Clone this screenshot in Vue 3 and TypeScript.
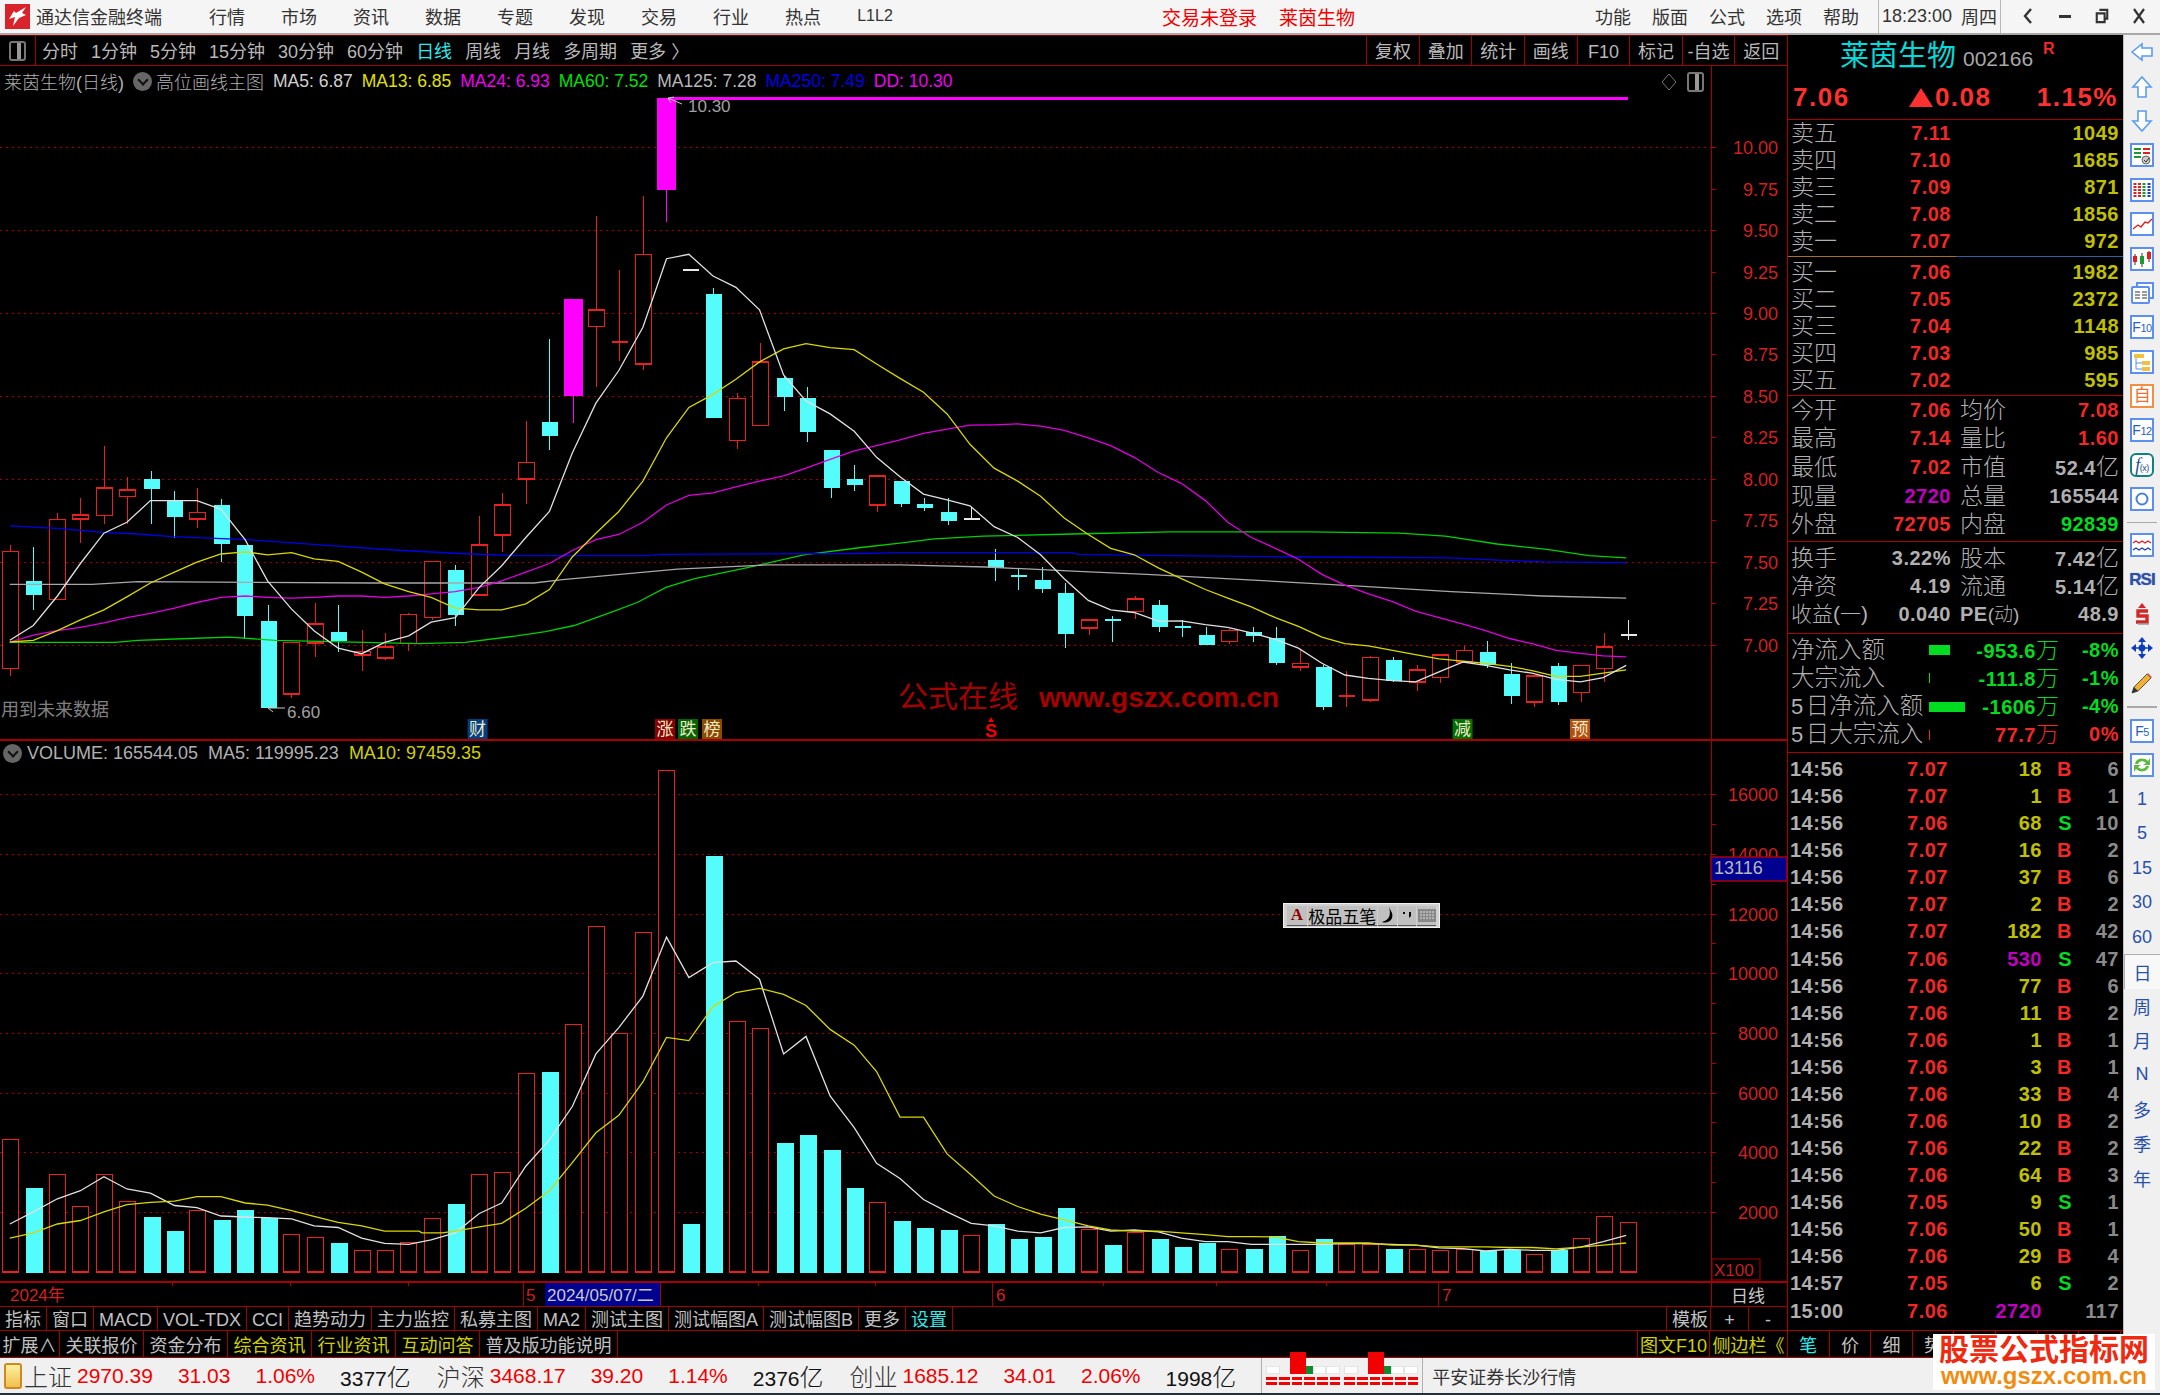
<template>
  <div class="app">
    <!-- top menu -->
    <header class="topbar">
      <svg class="logo" viewBox="0 0 25 25">
        <rect width="25" height="25" fill="#d8232a"/>
        <path d="M4 15 L10 13 L8 22 L14 14 L21 11 L17 9 L21 3 L11 9 L9 7 Z" fill="#fff"/>
      </svg>
      <span class="app-name">通达信金融终端</span>
      <nav class="menu">
        <span v-for="m in menus" :key="m">{{ m }}</span>
      </nav>
      <span class="login">交易未登录</span>
      <span class="login second">莱茵生物</span>
      <nav class="menu-right">
        <span v-for="m in rightMenus" :key="m">{{ m }}</span>
      </nav>
      <div class="clock"><span>18:23:00</span><span class="week">周四</span></div>
      <div class="win-btns">
        <svg viewBox="0 0 14 18"><path d="M10 2 L4 9 L10 16" fill="none" stroke="#333" stroke-width="2.4"/></svg>
        <svg viewBox="0 0 14 18"><rect x="1" y="8" width="12" height="3" fill="#333"/></svg>
        <svg viewBox="0 0 16 18"><path d="M5 2h9v10h-3M2 6h9v10H2z" fill="none" stroke="#333" stroke-width="2.4"/></svg>
        <svg viewBox="0 0 14 18"><path d="M2 2 L12 16 M12 2 L2 16" fill="none" stroke="#333" stroke-width="2.2"/></svg>
      </div>
    </header>

    <div class="body">
      <main class="main">
        <!-- period tool bar -->
        <div class="toolbar">
          <div class="tool-toggle"><i class="box-icon"></i></div>
          <div class="periods">
            <span v-for="p in periods" :key="p" :class="{ active: p === '日线' }">{{ p }}</span>
            <span>更多 〉</span>
          </div>
          <div class="tool-btns">
            <span v-for="b in toolBtns" :key="b">{{ b }}</span>
          </div>
        </div>

        <!-- charts -->
        <div class="chart-wrap">
          <svg class="chart" viewBox="0 66 1787 1240" width="1787" height="1240">
            <!-- dotted grid -->
            <g shape-rendering="crispEdges">
              <line v-for="t in gridYs" :key="t" x1="0" x2="1711" :y1="t" :y2="t" class="dot"/>
            </g>

            <!-- price candles -->
            <g shape-rendering="crispEdges">
              <g v-for="c in candleBars" :key="c.x">
                <line :x1="c.x" :x2="c.x" :y1="c.top" :y2="c.bot" :stroke="c.color"/>
                <rect v-if="c.hollow" :x="c.x - 8" :y="c.bodyY" width="16" :height="c.bodyH" fill="#000" :stroke="c.color" stroke-width="1.5"/>
                <rect v-else :x="c.x - c.w / 2" :y="c.bodyY" :width="c.w" :height="c.bodyH" :fill="c.color"/>
              </g>
            </g>
            <line x1="670" x2="1628" y1="98.6" y2="98.6" stroke="#f0f" stroke-width="3"/>

            <!-- price MA lines -->
            <polyline v-for="l in priceLines" :key="l.color" :points="l.points" :stroke="l.color" class="ma"/>

            <!-- high / low markers -->
            <path d="M682 104 L668 98 M668 98 L674 97 M668 98 L671 103" class="marker"/>
            <text x="688" y="112" class="mark-text">10.30</text>
            <path d="M285 708 L268 708 M268 708 L273 705 M268 708 L273 712" class="marker"/>
            <text x="287" y="718" class="mark-text">6.60</text>
            <text x="1" y="716" class="hint">用到未来数据</text>

            <!-- site mark -->
            <text x="898" y="707" class="site-zh">公式在线</text>
            <text x="1039" y="707" class="site-en">www.gszx.com.cn</text>

            <!-- event badges -->
            <g v-for="b in badges" :key="b.text">
              <rect :x="b.x - 10" y="719" width="20" height="20" :fill="b.bg"/>
              <text :x="b.x" y="735" class="badge-text">{{ b.text }}</text>
            </g>
            <path d="M991 717 L994 722 H988 Z" fill="#f00000"/>
            <text x="991" y="737" class="badge-s">S</text>

            <!-- volume bars -->
            <g shape-rendering="crispEdges">
              <g v-for="v in volBars" :key="v.x">
                <rect v-if="v.up" :x="v.x - 8" :y="v.top" width="16" :height="1272 - v.top" fill="#000" stroke="#e82020" stroke-width="1.5"/>
                <rect v-else :x="v.x - 8" :y="v.top" width="17" :height="1273 - v.top" fill="#54fcfc"/>
              </g>
            </g>
            <polyline v-for="l in volLines" :key="l.color" :points="l.points" :stroke="l.color" class="ma"/>

            <!-- frame -->
            <g class="frame" shape-rendering="crispEdges">
              <line x1="1711" x2="1711" y1="66" y2="1282"/>
              <line x1="0" x2="1787" y1="740" y2="740" stroke-width="2"/>
              <line x1="0" x2="1787" y1="1282" y2="1282" stroke-width="2"/>
              <line v-for="t in axisTicks" :key="t" x1="1711" x2="1716" :y1="t" :y2="t"/>
              <line v-for="t in dateTicks" :key="t" :x1="t" :x2="t" y1="1282" y2="1286"/>
              <line v-for="t in [523, 545, 660, 992, 1438, 1711]" :key="t" :x1="t" :x2="t" y1="1282" y2="1306"/>
            </g>

            <!-- axes -->
            <text v-for="a in priceAxis" :key="a.label" x="1778" :y="a.y + 7" class="axis">{{ a.label }}</text>
            <text v-for="a in volAxis" :key="a.label" x="1778" :y="a.y + 7" class="axis">{{ a.label }}</text>
            <rect x="1711" y="857" width="76" height="24" fill="#000090" stroke="#a80000" stroke-width="1.5"/>
            <text x="1714" y="874" class="box-value">13116</text>
            <rect x="1712" y="1259" width="48" height="21" fill="#000" stroke="#a80000"/>
            <text x="1714" y="1276" class="x-unit">X100</text>

            <!-- date row -->
            <rect x="545" y="1283" width="115" height="23" fill="#000090"/>
            <text x="10" y="1301" class="date">2024年</text>
            <text x="526" y="1301" class="date">5</text>
            <text x="547" y="1301" class="date-cur">2024/05/07/二</text>
            <text x="996" y="1301" class="date">6</text>
            <text x="1442" y="1301" class="date">7</text>
            <text x="1731" y="1302" class="date-cur">日线</text>
          </svg>

          <div class="legend">
            <span class="grey zh">莱茵生物(日线)</span>
            <i class="circle-chev"></i>
            <span class="grey zh name">高位画线主图</span>
            <span v-for="m in priceLegend" :key="m.label" :style="{ color: m.color }">{{ m.label }}</span>
          </div>
          <div class="legend-icons">
            <svg width="16" height="20" viewBox="0 0 16 20"><path d="M8 2 L15 10 L8 18 L1 10 Z" fill="none" stroke="#777"/></svg>
            <i class="box-icon"></i>
          </div>
          <div class="legend vol">
            <i class="circle-chev"></i>
            <span class="grey first">VOLUME: 165544.05</span>
            <span class="grey">MA5: 119995.23</span>
            <span class="yellow">MA10: 97459.35</span>
          </div>

          <!-- floating input method bar -->
          <div class="ime">
            <span class="ime-a">A</span>
            <span class="ime-name">极品五笔</span>
            <span class="ime-cell">
              <svg width="14" height="18" viewBox="0 0 14 18"><path d="M9 1 C11 8 10 14 2 16 C8 18 14 14 12 7 Z" fill="#000"/></svg>
            </span>
            <span class="ime-cell">
              <svg width="12" height="12" viewBox="0 0 12 12"><path d="M2 3h2v2H2zM8 3h2v4L8 9z" fill="#000"/></svg>
            </span>
            <span class="ime-cell">
              <svg width="18" height="18" viewBox="0 0 18 18"><rect y="3" width="18" height="13" fill="#888"/><path d="M2 6h14M2 9h14M2 12h14" stroke="#ddd" stroke-dasharray="2 1"/></svg>
            </span>
          </div>
        </div>

        <!-- bottom tabs -->
        <div class="tabrow first">
          <span v-for="t in tabs1" :key="t" :class="{ cyan: t === '设置' }">{{ t }}</span>
          <div class="tabrow-end">
            <span class="w-45">模板</span><span class="w-38">+</span><span class="w-38 last">-</span>
          </div>
        </div>
        <div class="tabrow second">
          <span v-for="t in tabs2" :key="t" :class="{ yellow: yellowTabs.includes(t) }">{{ t }}</span>
          <div class="tabrow-end">
            <span class="yellow w-tight">图文F10</span><span class="yellow w-side last">侧边栏《</span>
          </div>
        </div>
      </main>

      <!-- quote panel -->
      <aside class="panel">
        <div class="quote-head">
          <div class="title">
            <span class="stock">莱茵生物</span><span class="code">002166</span><sup class="r">R</sup>
          </div>
          <div class="price-row">
            <span>7.06</span><span class="chg"><i class="tri"></i>0.08</span><span>1.15%</span>
          </div>
        </div>

        <div class="book sell">
          <div v-for="r in sells" :key="r[0]" class="book-row">
            <span class="zh grey">{{ r[0] }}</span><b class="red">{{ r[1] }}</b><b class="vol-c">{{ r[2] }}</b>
          </div>
        </div>
        <div class="book buy">
          <div v-for="r in buys" :key="r[0]" class="book-row">
            <span class="zh grey">{{ r[0] }}</span><b class="red">{{ r[1] }}</b><b class="vol-c">{{ r[2] }}</b>
          </div>
        </div>

        <div class="stats first">
          <div v-for="r in statsA" :key="r.a" class="stat-row">
            <span class="zh grey">{{ r.a }}</span><b :class="r.ac">{{ r.av }}</b>
            <span class="zh grey lab2">{{ r.b }}</span><b :class="r.bc">{{ r.bv }}<span v-if="r.unit" class="zh unit">{{ r.unit }}</span></b>
          </div>
        </div>
        <div class="stats second">
          <div class="stat-row">
            <span class="zh grey">换手</span><b class="grey">3.22%</b>
            <span class="zh grey lab2">股本</span><b class="grey">7.42<span class="zh unit">亿</span></b>
          </div>
          <div class="stat-row">
            <span class="zh grey">净资</span><b class="grey">4.19</b>
            <span class="zh grey lab2">流通</span><b class="grey">5.14<span class="zh unit">亿</span></b>
          </div>
          <div class="stat-row">
            <span class="zh grey small">收益(一)</span><b class="grey">0.040</b>
            <span class="grey lab2 pe"><b>PE</b><span class="zh">(动)</span></span><b class="grey">48.9</b>
          </div>
        </div>

        <div class="flows">
          <div v-for="f in flows" :key="f.label" class="flow-row" :class="f.color">
            <span class="zh grey flow-label"><b v-if="f.five">5</b>{{ f.label }}</span>
            <span class="flow-bar"><i :style="{ width: f.bar + 'px' }"></i></span>
            <b class="flow-val">{{ f.val }}<span class="zh unit">万</span></b>
            <b class="flow-pct">{{ f.pct }}</b>
          </div>
        </div>

        <div class="trades">
          <div v-for="(t, i) in trades" :key="i" class="trade-row">
            <b class="grey">{{ t[0] }}</b>
            <b class="red">{{ t[1] }}</b>
            <b :class="Number(t[2]) >= 500 ? 'purple' : 'vol-c'">{{ t[2] }}</b>
            <b :class="t[3] === 'S' ? 'green' : 'red'">{{ t[3] }}</b>
            <b class="dim">{{ t[4] }}</b>
          </div>
        </div>

        <div class="panel-tabs">
          <span class="cyan">笔</span><span>价</span><span>细</span><span>势</span><span></span><span></span><span></span><span></span>
        </div>
      </aside>

      <!-- side icons -->
      <aside class="sidebar">
        <div class="sb-item">
          <svg class="ic" viewBox="0 0 24 24"><path d="M2 12 L12 4 V8 H22 V16 H12 V20 Z" class="arrow"/></svg>
        </div>
        <div class="sb-item">
          <svg class="ic" viewBox="0 0 24 24"><path d="M12 2 L21 12 H16 V22 H8 V12 H3 Z" class="arrow"/></svg>
        </div>
        <div class="sb-item">
          <svg class="ic" viewBox="0 0 24 24"><path d="M12 22 L21 12 H16 V2 H8 V12 H3 Z" class="arrow"/></svg>
        </div>
        <div class="sb-item">
          <svg class="ic" viewBox="0 0 24 24"><rect x="1" y="1" width="22" height="22" class="frame-ic"/><path d="M4 6h7M4 10h7M4 14h7" stroke="#1a9a30" stroke-width="2"/><path d="M13 6h7M13 10h7" stroke="#e02020" stroke-width="2"/><circle cx="16" cy="17" r="4" fill="#ccc" stroke="#666"/><path d="M14 17l2 2 3-4" fill="none" stroke="#333"/></svg>
        </div>
        <div class="sb-item">
          <svg class="ic" viewBox="0 0 24 24"><rect x="1" y="1" width="22" height="22" class="frame-ic"/><path d="M5 5v14" stroke="#e02020" stroke-width="3" stroke-dasharray="2 1"/><path d="M9.5 5v14" stroke="#e02020" stroke-width="3" stroke-dasharray="2 1"/><path d="M14 5v14" stroke="#1a9a30" stroke-width="3" stroke-dasharray="2 1"/><path d="M19 5v14" stroke="#2040c0" stroke-width="3" stroke-dasharray="2 1"/></svg>
        </div>
        <div class="sb-item">
          <svg class="ic" viewBox="0 0 24 24"><rect x="1" y="1" width="22" height="22" class="frame-ic"/><path d="M3 17 L8 13 L11 15 L15 10 L18 11 L22 7" fill="none" stroke="#e02020" stroke-width="1.4"/></svg>
        </div>
        <div class="sb-item">
          <svg class="ic" viewBox="0 0 24 24"><rect x="1" y="1" width="22" height="22" class="frame-ic"/><path d="M5 7v11M12 6v14M19 4v11" stroke="#333"/><rect x="3" y="9" width="4" height="6" fill="#e02020"/><rect x="10" y="9" width="4" height="8" fill="#1a9a30"/><rect x="17" y="5" width="4" height="7" fill="#e02020"/></svg>
        </div>
        <div class="sb-item">
          <svg class="ic" viewBox="0 0 24 24"><rect x="7" y="2" width="16" height="15" class="frame-ic"/><rect x="2" y="6" width="17" height="16" class="frame-ic" rx="1"/><path d="M5 11h5M12 11h5M5 14h5M12 14h5M5 17h5M12 17h5" stroke="#777" stroke-width="1.6"/></svg>
        </div>
        <div class="sb-item"><span class="ic-text"><i>F</i>10</span></div>
        <div class="sb-item">
          <svg class="ic" viewBox="0 0 24 24"><rect x="1" y="1" width="22" height="22" class="frame-ic"/><path d="M6 8v11h6M6 13h6" stroke="#5b90f0" fill="none"/><rect x="4" y="4" width="10" height="4" fill="#f0c040"/><rect x="12" y="11" width="8" height="4" fill="#f0c040"/><rect x="12" y="17" width="8" height="4" fill="#f0c040"/></svg>
        </div>
        <div class="sb-item">
          <span class="ic-text zi">自</span>
        </div>
        <div class="sb-item"><span class="ic-text"><i>F</i>12</span></div>
        <div class="sb-item">
          <span class="ic-text fx"><i>f</i><small>(x)</small></span>
        </div>
        <div class="sb-item">
          <svg class="ic" viewBox="0 0 24 24"><rect x="1" y="1" width="22" height="22" class="frame-ic"/><circle cx="12" cy="12" r="5.5" fill="none" stroke="#4a80d8" stroke-width="2"/></svg>
        </div>
        <div class="sb-divider"></div>
        <div class="sb-item">
          <svg class="ic" viewBox="0 0 24 24"><rect x="1" y="1" width="22" height="22" class="frame-ic"/><path d="M3 10l3-2 3 2 3-2 3 2 3-2 3 2" fill="none" stroke="#e02020" stroke-width="1.4"/><path d="M3 17l3-2 3 2 3-2 3 2 3-2 3 2" fill="none" stroke="#2040c0" stroke-width="1.4"/></svg>
        </div>
        <div class="sb-item"><span class="rsi">RSI</span></div>
        <div class="sb-item">
          <svg class="ic" viewBox="0 0 24 24"><path d="M12 1 L16 6 H8 Z" fill="#d02828"/><path d="M18 9 H8 V14 H17 V20 H6" fill="none" stroke="#d02828" stroke-width="3.4"/><path d="M8 22 H19" stroke="#999" stroke-width="1.5"/></svg>
        </div>
        <div class="sb-item">
          <svg class="ic" viewBox="0 0 24 24"><path d="M12 1 L16 6 H8 Z M12 23 L16 18 H8 Z M1 12 L6 8 V16 Z M23 12 L18 8 V16 Z" fill="#0a3cc0"/><circle cx="12" cy="12" r="3.4" fill="#0a3cc0"/><path d="M12 5V19M5 12H19" stroke="#0a3cc0" stroke-width="1.6"/></svg>
        </div>
        <div class="sb-item">
          <svg class="ic" viewBox="0 0 24 24"><path d="M2 22 L4 16 L17 3 L21 7 L8 20 Z" fill="#f0b030" stroke="#555"/><path d="M17 3 L21 7 L22 6 L18 2 Z" fill="#e06060"/><path d="M2 22 L4 16 L8 20 Z" fill="#333"/></svg>
        </div>
        <div class="sb-divider tall"></div>
        <div class="sb-item"><span class="ic-text"><i>F</i>5</span></div>
        <div class="sb-item">
          <svg class="ic" viewBox="0 0 24 24"><rect x="1" y="1" width="22" height="22" class="frame-ic"/><path d="M5 11 C6 5 14 4 18 8 L20 5 V12 H13 L16 10 C13 7 9 8 8 11 Z" fill="#60b840"/><path d="M19 13 C18 19 10 20 6 16 L4 19 V12 H11 L8 14 C11 17 15 16 16 13 Z" fill="#60b840"/></svg>
        </div>
        <div v-for="p in sidePeriods" :key="p" class="sb-item period" :class="{ on: p === '日' }">{{ p }}</div>
      </aside>
    </div>

    <!-- status bar -->
    <footer class="status">
      <i class="status-icon"></i>
      <div v-for="s in indexes" :key="s.name" class="idx">
        <span class="idx-name">{{ s.name }}</span>
        <span class="red">{{ s.value }}</span>
        <span class="red">{{ s.chg }}</span>
        <span class="red">{{ s.pct }}</span>
        <span class="amt">{{ s.amt }}<em>亿</em></span>
      </div>
      <div class="mini-wrap">
        <div v-for="g in 2" :key="g" class="mini">
          <div class="mini-top"><i></i><i class="r"></i><i class="g"></i><i></i><i></i></div>
          <div class="mini-bot"><i v-for="n in 12" :key="n"></i></div>
        </div>
      </div>
      <span class="broker">平安证券长沙行情</span>
    </footer>

    <!-- site stamp -->
    <div class="stamp">
      <div class="stamp-zh">股票公式指标网</div>
      <div class="stamp-en">www.gszx.com.cn</div>
    </div>
  </div>
</template>

<script setup lang="ts">
type Kind = 'r' | 'c' | 'm' | 'w'
type Candle = [Kind, number, number, number, number]
type Pt = [number, number]

const menus = ['行情', '市场', '资讯', '数据', '专题', '发现', '交易', '行业', '热点', 'L1L2']
const rightMenus = ['功能', '版面', '公式', '选项', '帮助']
const periods = ['分时', '1分钟', '5分钟', '15分钟', '30分钟', '60分钟', '日线', '周线', '月线', '多周期']
const toolBtns = ['复权', '叠加', '统计', '画线', 'F10', '标记', '-自选', '返回']
const tabs1 = ['指标', '窗口', 'MACD', 'VOL-TDX', 'CCI', '趋势动力', '主力监控', '私募主图', 'MA2', '测试主图', '测试幅图A', '测试幅图B', '更多', '设置']
const tabs2 = ['扩展∧', '关联报价', '资金分布', '综合资讯', '行业资讯', '互动问答', '普及版功能说明']
const yellowTabs = ['综合资讯', '行业资讯', '互动问答']
const sidePeriods = ['1', '5', '15', '30', '60', '日', '周', '月', 'N', '多', '季', '年']

// values were read off the zoomed reference, so x / y go through the crop scale
const X0 = (zx: number) => zx / 1.742
const X1 = (zx: number) => 900 + zx / 1.742
const PY = (zy: number) => 80 + zy / 2.306
const VY = (zy: number) => 740 + zy / 2.851
const candleX = (i: number) => Math.round(9.8 + i * 23.45) + 0.5

const rawCandles: Candle[] = [
  ['r', 1072, 1087, 1357, 1375], ['c', 1076, 1155, 1188, 1222], ['r', 998, 1014, 1198, 1198], ['r', 965, 1003, 1012, 1068],
  ['r', 843, 941, 1004, 1023], ['r', 916, 945, 960, 1023], ['c', 902, 920, 943, 1023], ['c', 947, 970, 1008, 1057],
  ['r', 940, 997, 1012, 1033], ['c', 966, 979, 1070, 1112], ['c', 1072, 1072, 1237, 1288], ['c', 1210, 1248, 1448, 1448],
  ['r', 1297, 1297, 1416, 1424], ['r', 1207, 1255, 1298, 1330], ['c', 1210, 1273, 1293, 1320], ['r', 1268, 1318, 1326, 1362],
  ['r', 1275, 1308, 1333, 1338], ['r', 1228, 1232, 1300, 1316], ['r', 1110, 1110, 1240, 1245], ['c', 1118, 1131, 1233, 1258],
  ['r', 1005, 1072, 1188, 1188], ['r', 953, 980, 1049, 1088], ['r', 787, 882, 920, 977], ['c', 597, 788, 822, 853],
  ['m', 505, 505, 729, 790], ['r', 314, 530, 568, 708], ['r', 438, 603, 606, 648], ['r', 268, 402, 655, 668],
  ['m', 42, 42, 254, 327], ['w', 436, 436, 437, 437], ['c', 480, 494, 780, 780], ['r', 722, 734, 831, 850],
  ['r', 607, 650, 797, 797], ['c', 682, 687, 732, 763], ['c', 708, 733, 812, 835], ['c', 853, 853, 942, 963],
  ['c', 888, 920, 933, 947], ['r', 913, 913, 980, 997], ['c', 925, 925, 978, 985], ['c', 963, 978, 987, 995],
  ['c', 965, 996, 1016, 1026], ['w', 985, 1010, 1012, 1015], ['c', 1082, 1106, 1125, 1155], ['c', 1125, 1142, 1144, 1175],
  ['c', 1123, 1152, 1174, 1182], ['c', 1160, 1183, 1278, 1310], ['r', 1245, 1245, 1264, 1280], ['c', 1237, 1244, 1246, 1296],
  ['r', 1190, 1197, 1226, 1243], ['c', 1200, 1211, 1261, 1272], ['c', 1245, 1260, 1266, 1285], ['c', 1262, 1280, 1303, 1303],
  ['r', 1265, 1270, 1295, 1300], ['c', 1262, 1273, 1282, 1295], ['c', 1262, 1286, 1345, 1348], ['r', 1312, 1346, 1354, 1362],
  ['c', 1350, 1353, 1445, 1452], ['r', 1362, 1418, 1422, 1445], ['r', 1328, 1332, 1430, 1435], ['c', 1330, 1338, 1385, 1388],
  ['r', 1350, 1361, 1388, 1408], ['r', 1325, 1326, 1378, 1390], ['r', 1305, 1315, 1342, 1342], ['c', 1294, 1318, 1350, 1355],
  ['c', 1345, 1370, 1420, 1440], ['r', 1372, 1374, 1434, 1447], ['c', 1345, 1352, 1434, 1442], ['r', 1350, 1350, 1413, 1434],
  ['r', 1276, 1308, 1357, 1388], ['w', 1245, 1277, 1279, 1292],
]

const kindColor: Record<Kind, string> = { r: '#e82020', c: '#54fcfc', m: '#ff00ff', w: '#e8e8e8' }

const candleBars = rawCandles.map(([k, wt, bt, bb, wb], i) => {
  const h = PY(bb) - PY(bt)
  const thin = h < 3
  return {
    x: candleX(i),
    color: kindColor[k],
    top: PY(wt),
    bot: PY(wb),
    bodyY: PY(bt),
    bodyH: thin ? 2 : h,
    hollow: k === 'r' && !thin,
    w: k === 'm' ? 19 : 16,
  }
})

const path = (left: Pt[], right: Pt[], yf: (n: number) => number) =>
  [...left.map(([x, y]) => `${X0(x).toFixed(1)},${yf(y).toFixed(1)}`), ...right.map(([x, y]) => `${X1(x).toFixed(1)},${yf(y).toFixed(1)}`)].join(' ')

const priceLines = [
  {
    color: '#00d000',
    points: path(
      [[17, 1297], [200, 1297], [240, 1292], [330, 1288], [400, 1285], [480, 1292], [730, 1300], [810, 1297], [900, 1282], [950, 1272], [1000, 1258], [1070, 1225], [1110, 1205], [1160, 1170], [1210, 1150], [1300, 1125], [1400, 1095], [1500, 1078]],
      [[0, 1068], [60, 1058], [145, 1052], [300, 1047], [470, 1042], [715, 1042], [870, 1045], [950, 1052], [1040, 1070], [1130, 1083], [1200, 1097], [1265, 1102]],
      PY,
    ),
  },
  {
    color: '#0000e8',
    points: path(
      [[17, 1028], [100, 1034], [180, 1043], [240, 1047], [300, 1053], [430, 1060], [570, 1073], [700, 1085], [820, 1093], [900, 1097], [1130, 1097], [1150, 1094], [1500, 1092]],
      [[0, 1090], [300, 1090], [310, 1094], [470, 1097], [715, 1100], [960, 1102], [1040, 1107], [1120, 1111], [1265, 1113]],
      PY,
    ),
  },
  {
    color: '#a8a8a8',
    points: path(
      [[17, 1163], [160, 1163], [240, 1157], [650, 1160], [930, 1160], [980, 1152], [1180, 1128], [1340, 1118], [1500, 1118]],
      [[0, 1118], [150, 1123], [230, 1128], [310, 1133], [430, 1140], [640, 1155], [800, 1167], [960, 1180], [1120, 1190], [1265, 1195]],
      PY,
    ),
  },
  {
    color: '#e000e0',
    points: path(
      [[17, 1296], [58, 1280], [100, 1270], [140, 1262], [181, 1252], [221, 1240], [262, 1230], [304, 1218], [343, 1205], [385, 1193], [427, 1190], [466, 1193], [508, 1195], [547, 1193], [589, 1190], [630, 1190], [670, 1193], [712, 1190], [751, 1185], [793, 1180], [835, 1170], [874, 1155], [916, 1135], [957, 1115], [997, 1085], [1038, 1060], [1078, 1048], [1120, 1020], [1161, 980], [1200, 958], [1242, 952], [1282, 938], [1323, 925], [1365, 913], [1404, 895], [1446, 875], [1488, 855], [1527, 843]],
      [[0, 830], [41, 815], [82, 805], [122, 796], [164, 795], [205, 793], [245, 798], [286, 808], [328, 825], [367, 843], [408, 870], [450, 905], [490, 930], [532, 970], [571, 1020], [612, 1055], [654, 1080], [694, 1105], [735, 1140], [775, 1165], [816, 1185], [858, 1203], [898, 1225], [939, 1240], [981, 1255], [1020, 1270], [1062, 1288], [1101, 1300], [1143, 1315], [1185, 1322], [1225, 1328], [1265, 1330]],
      PY,
    ),
  },
  {
    color: '#d8d800',
    points: path(
      [[17, 1296], [58, 1292], [100, 1270], [140, 1245], [181, 1222], [221, 1192], [262, 1160], [304, 1135], [343, 1112], [385, 1093], [427, 1088], [466, 1095], [508, 1090], [547, 1104], [589, 1110], [630, 1135], [670, 1162], [712, 1180], [751, 1193], [793, 1218], [835, 1222], [874, 1222], [916, 1208], [957, 1175], [997, 1100], [1038, 1045], [1078, 995], [1120, 925], [1161, 825], [1200, 755], [1242, 725], [1282, 690], [1323, 650], [1365, 620], [1404, 608], [1446, 617], [1488, 622], [1527, 655]],
      [[0, 688], [41, 720], [82, 770], [122, 840], [164, 895], [205, 925], [245, 960], [286, 1010], [328, 1048], [367, 1080], [408, 1095], [450, 1125], [490, 1150], [532, 1175], [571, 1195], [612, 1215], [654, 1240], [694, 1260], [735, 1285], [775, 1300], [816, 1305], [858, 1315], [898, 1325], [939, 1335], [981, 1340], [1020, 1345], [1062, 1352], [1101, 1362], [1143, 1375], [1185, 1375], [1225, 1368], [1265, 1360]],
      PY,
    ),
  },
  {
    color: '#e0e0e0',
    points: path(
      [[17, 1292], [58, 1258], [100, 1190], [140, 1115], [181, 1045], [221, 1020], [262, 970], [343, 970], [385, 990], [427, 1060], [466, 1155], [508, 1220], [547, 1270], [589, 1310], [630, 1323], [670, 1297], [712, 1282], [751, 1250], [793, 1240], [835, 1170], [874, 1120], [916, 1055], [957, 995], [997, 860], [1038, 745], [1078, 670], [1120, 570], [1161, 412], [1200, 402], [1242, 452], [1282, 478], [1323, 530], [1365, 680], [1404, 740], [1446, 770], [1488, 810], [1527, 870]],
      [[0, 915], [41, 955], [82, 968], [122, 982], [164, 1030], [205, 1055], [245, 1095], [286, 1150], [328, 1200], [367, 1222], [408, 1228], [450, 1248], [490, 1247], [532, 1256], [571, 1262], [612, 1275], [654, 1290], [694, 1310], [735, 1345], [775, 1372], [816, 1380], [858, 1385], [898, 1388], [939, 1365], [981, 1342], [1020, 1350], [1062, 1360], [1101, 1368], [1143, 1382], [1185, 1388], [1225, 1378], [1265, 1350]],
      PY,
    ),
  },
]

// [kind, top] per day, same x as the candles
const rawVols: [number, number][] = [
  [1, 1138], [0, 1274], [1, 1237], [1, 1328], [1, 1237], [1, 1314], [0, 1356], [0, 1398], [1, 1340], [0, 1367],
  [0, 1338], [0, 1360], [1, 1408], [1, 1416], [0, 1432], [1, 1455], [1, 1455], [1, 1430], [1, 1362], [0, 1321],
  [1, 1237], [1, 1232], [1, 950], [0, 945], [1, 809], [1, 530], [1, 835], [1, 548], [1, 86], [0, 1377],
  [0, 329], [1, 800], [1, 822], [0, 1146], [0, 1124], [0, 1167], [0, 1274], [1, 1318], [0, 1368], [0, 1389],
  [0, 1393], [1, 1412], [0, 1377], [0, 1420], [0, 1415], [0, 1330], [1, 1395], [0, 1437], [1, 1403], [0, 1420],
  [0, 1442], [0, 1430], [1, 1451], [0, 1449], [0, 1412], [1, 1455], [0, 1420], [1, 1438], [1, 1436], [0, 1449],
  [1, 1451], [1, 1455], [1, 1452], [0, 1455], [0, 1450], [1, 1465], [0, 1452], [1, 1421], [1, 1357], [1, 1374],
]
const volBars = rawVols.map(([up, top], i) => ({ x: candleX(i), up: up === 1, top: Math.round(VY(top)) + 0.5 }))

const volLines = [
  {
    color: '#e0e0e0',
    points: path(
      [[17, 1380], [58, 1345], [100, 1308], [140, 1285], [181, 1245], [221, 1280], [262, 1292], [304, 1327], [343, 1333], [385, 1357], [427, 1360], [466, 1362], [508, 1365], [547, 1385], [589, 1390], [630, 1420], [670, 1435], [712, 1438], [751, 1425], [793, 1405], [835, 1350], [874, 1320], [916, 1215], [957, 1140], [997, 1045], [1038, 895], [1078, 820], [1120, 730], [1161, 562], [1200, 677], [1242, 635], [1282, 630], [1323, 682], [1365, 895], [1404, 845], [1446, 1015], [1488, 1105], [1527, 1207]],
      [[0, 1250], [41, 1310], [82, 1345], [124, 1378], [164, 1385], [205, 1400], [245, 1405], [286, 1390], [328, 1388], [367, 1400], [408, 1397], [450, 1402], [490, 1420], [532, 1430], [571, 1430], [612, 1438], [654, 1438], [694, 1438], [735, 1438], [775, 1436], [816, 1436], [858, 1438], [898, 1440], [939, 1448], [981, 1450], [1020, 1457], [1062, 1452], [1101, 1455], [1143, 1455], [1185, 1446], [1225, 1430], [1265, 1412]],
      VY,
    ),
  },
  {
    color: '#d8d800',
    points: path(
      [[17, 1420], [58, 1405], [100, 1380], [140, 1370], [181, 1345], [221, 1325], [262, 1318], [304, 1315], [343, 1302], [385, 1302], [427, 1320], [466, 1326], [508, 1342], [547, 1358], [589, 1375], [630, 1385], [670, 1400], [730, 1400], [735, 1405], [770, 1405], [793, 1400], [835, 1388], [874, 1378], [916, 1335], [957, 1285], [997, 1205], [1038, 1120], [1078, 1070], [1120, 975], [1161, 848], [1200, 857], [1242, 760], [1282, 720], [1323, 708], [1365, 725], [1404, 757], [1446, 825], [1488, 870], [1527, 945]],
      [[0, 1075], [41, 1075], [82, 1180], [124, 1240], [164, 1300], [205, 1330], [245, 1352], [286, 1368], [328, 1385], [367, 1397], [408, 1400], [450, 1400], [490, 1405], [532, 1410], [571, 1416], [612, 1416], [654, 1417], [694, 1430], [735, 1434], [775, 1434], [816, 1434], [858, 1440], [898, 1440], [939, 1445], [981, 1445], [1020, 1445], [1062, 1447], [1101, 1447], [1143, 1451], [1185, 1446], [1225, 1440], [1265, 1434]],
      VY,
    ),
  },
]

const priceY = (p: number) => 644.6 - (p - 7) * 165.8
const volY = (v: number) => 1271.4 - (v / 2000) * 59.63

const priceAxis = [10, 9.75, 9.5, 9.25, 9, 8.75, 8.5, 8.25, 8, 7.75, 7.5, 7.25, 7].map((p) => ({ label: p.toFixed(2), y: priceY(p) }))
const volAxis = [16000, 14000, 12000, 10000, 8000, 6000, 4000, 2000].map((v) => ({ label: String(v), y: volY(v) }))

const gridYs = [
  ...[10, 9.5, 9, 8.5, 8, 7.5, 7].map((p) => Math.round(priceY(p)) + 0.5),
  ...[16000, 14000, 12000, 10000, 8000, 6000, 4000, 2000].map((v) => Math.round(volY(v)) + 0.5),
]
const axisTicks = [
  ...priceAxis.map((a) => Math.round(a.y) + 0.5),
  ...[16, 15, 14, 13, 12, 11, 10, 9, 8, 7, 6, 5, 4, 3, 2].map((k) => Math.round(volY(k * 1000)) + 0.5),
]
const dateTicks = [172, 290, 408, 758, 875, 1103, 1216, 1326]

const badges = [
  { x: 477.6, text: '财', bg: '#003f80' },
  { x: 665, text: '涨', bg: '#8a0000' },
  { x: 688, text: '跌', bg: '#006400' },
  { x: 712, text: '榜', bg: '#8a4a00' },
  { x: 1462.6, text: '减', bg: '#007000' },
  { x: 1580, text: '预', bg: '#b05010' },
]

const priceLegend = [
  { label: 'MA5: 6.87', color: '#d0d0d0' },
  { label: 'MA13: 6.85', color: '#e0e000' },
  { label: 'MA24: 6.93', color: '#f000f0' },
  { label: 'MA60: 7.52', color: '#00e000' },
  { label: 'MA125: 7.28', color: '#b8b8b8' },
  { label: 'MA250: 7.49', color: '#0000e8' },
  { label: 'DD: 10.30', color: '#f000f0' },
]

const sells = [
  ['卖五', '7.11', '1049'], ['卖四', '7.10', '1685'], ['卖三', '7.09', '871'], ['卖二', '7.08', '1856'], ['卖一', '7.07', '972'],
]
const buys = [
  ['买一', '7.06', '1982'], ['买二', '7.05', '2372'], ['买三', '7.04', '1148'], ['买四', '7.03', '985'], ['买五', '7.02', '595'],
]

const statsA = [
  { a: '今开', av: '7.06', ac: 'red', b: '均价', bv: '7.08', bc: 'red', unit: '' },
  { a: '最高', av: '7.14', ac: 'red', b: '量比', bv: '1.60', bc: 'red', unit: '' },
  { a: '最低', av: '7.02', ac: 'red', b: '市值', bv: '52.4', bc: 'grey', unit: '亿' },
  { a: '现量', av: '2720', ac: 'purple', b: '总量', bv: '165544', bc: 'grey', unit: '' },
  { a: '外盘', av: '72705', ac: 'red', b: '内盘', bv: '92839', bc: 'green', unit: '' },
]

const flows = [
  { label: '净流入额', five: false, bar: 21, val: '-953.6', pct: '-8%', color: 'flow-green' },
  { label: '大宗流入', five: false, bar: 1, val: '-111.8', pct: '-1%', color: 'flow-green' },
  { label: '日净流入额', five: true, bar: 36, val: '-1606', pct: '-4%', color: 'flow-green' },
  { label: '日大宗流入', five: true, bar: 1, val: '77.7', pct: '0%', color: 'flow-red' },
]

const trades: [string, string, string, string, string][] = [
  ['14:56', '7.07', '18', 'B', '6'], ['14:56', '7.07', '1', 'B', '1'], ['14:56', '7.06', '68', 'S', '10'],
  ['14:56', '7.07', '16', 'B', '2'], ['14:56', '7.07', '37', 'B', '6'], ['14:56', '7.07', '2', 'B', '2'],
  ['14:56', '7.07', '182', 'B', '42'], ['14:56', '7.06', '530', 'S', '47'], ['14:56', '7.06', '77', 'B', '6'],
  ['14:56', '7.06', '11', 'B', '2'], ['14:56', '7.06', '1', 'B', '1'], ['14:56', '7.06', '3', 'B', '1'],
  ['14:56', '7.06', '33', 'B', '4'], ['14:56', '7.06', '10', 'B', '2'], ['14:56', '7.06', '22', 'B', '2'],
  ['14:56', '7.06', '64', 'B', '3'], ['14:56', '7.05', '9', 'S', '1'], ['14:56', '7.06', '50', 'B', '1'],
  ['14:56', '7.06', '29', 'B', '4'], ['14:57', '7.05', '6', 'S', '2'], ['15:00', '7.06', '2720', '', '117'],
]

const indexes = [
  { name: '上证', value: '2970.39', chg: '31.03', pct: '1.06%', amt: '3377' },
  { name: '沪深', value: '3468.17', chg: '39.20', pct: '1.14%', amt: '2376' },
  { name: '创业', value: '1685.12', chg: '34.01', pct: '2.06%', amt: '1998' },
]
</script>

<style>
html, body {
  margin: 0;
  background: #000;
}
</style>

<style scoped>
.app {
  position: relative;
  width: 2160px;
  height: 1395px;
  overflow: hidden;
  display: flex;
  flex-direction: column;
  background: #000;
  color: #c0c0c0;
  font-family: "Liberation Sans", "Noto Sans CJK SC", sans-serif;
  font-size: 18px;
}

.topbar {
  height: 35px;
  box-sizing: border-box;
  display: flex;
  align-items: center;
  padding-bottom: 1px;
  background: #f5f5f5;
  border-bottom: 2px solid #a8a8a8;
  color: #333;
  font-size: 18px;
  flex-shrink: 0;
}
.logo { width: 25px; height: 25px; margin-left: 5px; }
.app-name { margin-left: 6px; width: 126px; white-space: nowrap; }
.menu { display: flex; align-items: center; gap: 36px; margin-left: 47px; }
.menu span:last-child { font-size: 16px; width: 36px; text-align: center; }
.login { color: #f00000; font-size: 19px; margin-left: 269px; }
.login.second { margin-left: 22px; }
.menu-right { display: flex; gap: 21px; margin-left: 240px; }
.clock {
  display: flex;
  align-items: center;
  height: 33px;
  margin-left: 19px;
  padding: 0 3px;
  gap: 9px;
  border-left: 1px solid #b8b8b8;
  border-right: 1px solid #b8b8b8;
}
.clock span:first-child { font-size: 18px; }
.clock .week { font-size: 18px; }
.win-btns { display: flex; gap: 23px; margin-left: 20px; align-items: center; }
.win-btns svg { width: 14px; height: 18px; }

.body { display: flex; height: 1323px; flex-shrink: 0; }
.main { width: 1787px; flex-shrink: 0; display: flex; flex-direction: column; }

.toolbar {
  height: 31px;
  box-sizing: border-box;
  display: flex;
  border-top: 1px solid #800000;
  border-bottom: 1px solid #a00000;
  color: #b8b8b8;
}
.tool-toggle {
  width: 35px;
  border-right: 1px solid #a00000;
  display: flex;
  align-items: center;
  justify-content: center;
}
.box-icon {
  display: block;
  width: 13px;
  height: 16px;
  border: 2px solid #777;
  border-radius: 3px;
  background: linear-gradient(90deg, #000 45%, #999 45%, #999 80%, #000 80%);
}
.periods { display: flex; gap: 13px; padding-left: 6px; line-height: 33px; }
.periods .active { color: #30e8e8; }
.tool-btns { display: flex; margin-left: auto; }
.tool-btns span {
  width: 52.6px;
  box-sizing: border-box;
  text-align: center;
  line-height: 33px;
  border-left: 1px solid #a00000;
  white-space: nowrap;
}

.chart-wrap { position: relative; height: 1240px; }
.chart { display: block; font-family: "Liberation Sans", "Noto Sans CJK SC", sans-serif; }
.dot { stroke: #a00000; stroke-dasharray: 2 4; stroke-width: 1; }
.ma { fill: none; stroke-width: 1.3; }
.marker { fill: none; stroke: #c8c8c8; stroke-width: 1; }
.mark-text { fill: #a0a0a0; font-size: 17px; }
.hint { fill: #808080; font-size: 18px; }
.site-zh { fill: #a80000; font-size: 30px; font-weight: 400; }
.site-en { fill: #a80000; font-size: 28px; font-weight: 700; }
.badge-text { fill: #f0e8c8; font-size: 17px; text-anchor: middle; }
.badge-s { fill: #f00000; font-size: 18px; font-weight: 700; text-anchor: middle; }
.frame line { stroke: #a80000; }
.axis { fill: #d02020; font-size: 18px; text-anchor: end; }
.box-value { fill: #b8b8b8; font-size: 18px; }
.x-unit { fill: #c02020; font-size: 17px; }
.date { fill: #d02020; font-size: 17px; }
.date-cur { fill: #c8c8c8; font-size: 17px; }

.legend {
  position: absolute;
  top: 0;
  left: 4px;
  display: flex;
  align-items: center;
  gap: 9px;
  height: 30px;
  font-size: 17.5px;
  white-space: nowrap;
}
.legend.vol { top: 674px; left: 3px; gap: 10px; font-size: 18px; height: 26px; }
.legend.vol .first { margin-left: -5px; }
.legend .zh { font-size: 18px; }
.legend .name { margin-left: -5px; }
.circle-chev {
  display: block;
  position: relative;
  width: 19px;
  height: 19px;
  border-radius: 50%;
  background: #666;
  flex-shrink: 0;
}
.circle-chev::after {
  content: "";
  position: absolute;
  left: 6px;
  top: 4px;
  width: 6px;
  height: 6px;
  border-right: 2px solid #111;
  border-bottom: 2px solid #111;
  transform: rotate(45deg);
}
.legend-icons {
  position: absolute;
  top: 6px;
  left: 1661px;
  display: flex;
  align-items: center;
  gap: 10px;
}

.ime {
  position: absolute;
  left: 1283px;
  top: 837px;
  width: 157px;
  height: 25px;
  box-sizing: border-box;
  padding: 3px;
  display: flex;
  align-items: center;
  gap: 1px;
  background: #d0d0d0;
  border: 1px solid #f0f0f0;
  color: #000;
  font-size: 17px;
}
.ime span {
  height: 19px;
  display: flex;
  align-items: center;
  justify-content: center;
  background: #c0c0c0;
  border-bottom: 1px solid #555;
}
.ime-a { width: 20px; color: #900000; font-weight: 700; font-family: "Liberation Serif", serif; }
.ime-name { width: 70px; white-space: nowrap; font-size: 17px; }
.ime-cell { width: 19px; }

.tabrow {
  display: flex;
  height: 27px;
  box-sizing: border-box;
  border-bottom: 1px solid #a00000;
  white-space: nowrap;
}
.tabrow.first { height: 25px; border-top: 1px solid #a00000; }
.tabrow > span, .tabrow-end span {
  padding: 0 5px;
  line-height: 26px;
  border-right: 1px solid #a00000;
  flex-shrink: 0;
  text-align: center;
}
.tabrow.first > span:nth-child(-n+2) { padding: 0 5px; }
.tabrow.second > span { padding: 0 5.5px; line-height: 30px; }
.tabrow.second > span:first-child { padding: 0 2.5px; }
.tabrow.second .tabrow-end span { line-height: 30px; }
.tabrow-end { display: flex; margin-left: auto; }
.tabrow-end span { box-sizing: border-box; }
.tabrow-end .last { border-right: none; }
.w-45 { width: 45px; border-left: 1px solid #a00000; }
.w-38 { width: 38px; }
.w-tight { width: 73px; padding: 0 !important; border-left: 1px solid #a00000; }
.w-side { width: 77px; padding: 0 !important; }
.tabrow .cyan { color: #30e8e8; }
.yellow { color: #d0d000; }

.panel {
  width: 336px;
  flex-shrink: 0;
  box-sizing: border-box;
  border-left: 1px solid #a80000;
  display: flex;
  flex-direction: column;
}
.zh { font-weight: 300; }
.grey { color: #b0b0b0; }
.red { color: #f02828; }
.green { color: #00dc20; }
.purple { color: #c000c0; }
.vol-c { color: #c0c000; }
.dim { color: #8a8a8a; }
.cyan { color: #30e8e8; }

.quote-head { height: 85px; box-sizing: border-box; border-bottom: 1px solid #a80000; }
.title {
  height: 39px;
  display: flex;
  align-items: center;
  padding: 3px 0 0 52px;
  box-sizing: border-box;
  line-height: 1;
}
.stock { color: #00dcdc; font-size: 29px; }
.code { color: #a8a8a8; font-size: 21px; margin-left: 7px; margin-top: 5px; }
.r { color: #f02828; font-size: 16px; font-weight: 700; margin-left: 10px; margin-top: -14px; }
.price-row {
  display: flex;
  justify-content: space-between;
  padding: 8px 5px 0 5px;
  color: #ff3030;
  font-weight: 700;
  font-size: 26px;
  letter-spacing: 1.5px;
  line-height: 30px;
}
.price-row .chg { display: flex; align-items: center; margin-left: 14px; }
.tri {
  display: block;
  width: 0;
  height: 0;
  margin-right: 2px;
  border-left: 12px solid transparent;
  border-right: 12px solid transparent;
  border-bottom: 19px solid #ff3030;
}

.book { font-size: 20px; }
.book b, .stat-row b, .trade-row b, .flow-row b { font-size: 20px; letter-spacing: .5px; }
.book.sell { height: 136px; border-bottom: 1px solid transparent; border-image: linear-gradient(90deg, #a87020 50%, #3060a0 50%) 1; }
.book.buy { height: 139px; padding-top: 2px; box-sizing: border-box; border-bottom: 1px solid #a80000; }
.book-row {
  height: 27px;
  display: grid;
  grid-template-columns: 60px 100px 1fr;
  padding: 0 4px 0 3px;
  line-height: 27px;
}
.book-row .zh { font-size: 23px; }
.book-row b { text-align: right; }

.stats { box-sizing: border-box; border-bottom: 1px solid #a80000; }
.stats.first { height: 146px; }
.stats.second { height: 92px; padding-top: 2px; }
.stat-row {
  height: 28.6px;
  display: grid;
  grid-template-columns: 60px 100px 74px 1fr;
  padding: 0 4px 0 3px;
  line-height: 28px;
  white-space: nowrap;
}
.stats.second .stat-row { height: 28px; }
.stat-row .zh { font-size: 23px; }
.stat-row b { text-align: right; }
.lab2 { margin-left: 9px; }
.unit { font-size: 23px; font-weight: 300; letter-spacing: 0; }
.stat-row .small { font-size: 21px; }
.pe { font-size: 20px; }
.pe .zh { font-size: 19px; }

.flows { height: 120px; box-sizing: border-box; border-bottom: 1px solid #a80000; padding-top: 2px; }
.flow-row {
  height: 28.3px;
  display: grid;
  grid-template-columns: 138px 40px 90px 1fr;
  padding: 0 4px 0 3px;
  line-height: 28px;
  white-space: nowrap;
}
.flow-label { font-size: 23.5px; }
.flow-label b { font-size: 22px; margin-right: 2px; color: #b0b0b0; }
.flow-bar { display: flex; align-items: center; }
.flow-bar i { display: block; height: 10px; }
.flow-row b.flow-val, .flow-row b.flow-pct { text-align: right; }
.flow-green .flow-val, .flow-green .flow-pct { color: #00dc20; }
.flow-green .flow-bar i { background: #00dc20; }
.flow-red .flow-val, .flow-red .flow-pct { color: #f02828; }
.flow-red .flow-bar i { background: #f02828; }

.trades { height: 578px; box-sizing: border-box; padding-top: 2.5px; border-bottom: 1px solid #a80000; }
.trade-row {
  height: 27.08px;
  display: grid;
  grid-template-columns: 70px 88px 94px 30px 1fr;
  padding: 0 4px 0 2px;
  line-height: 27px;
}
.trade-row b { text-align: right; }
.trade-row b:first-child { text-align: left; }
.trade-row b:nth-child(4) { text-align: right; }

.panel-tabs { display: flex; height: 27px; }
.panel-tabs span {
  width: 41.6px;
  box-sizing: border-box;
  text-align: center;
  line-height: 30px;
  border-right: 1px solid #a80000;
  border-bottom: 1px solid #a80000;
}

.sidebar {
  width: 37px;
  flex-shrink: 0;
  display: flex;
  flex-direction: column;
  background: #f0f0f0;
  border-left: 1px solid #c0c0c0;
  box-sizing: border-box;
}
.sb-item {
  height: 34.4px;
  flex-shrink: 0;
  display: flex;
  align-items: center;
  justify-content: center;
}
.ic { width: 24px; height: 24px; display: block; overflow: visible; }
.arrow { fill: #fff; stroke: #5a9cf0; stroke-width: 1.6; }
.frame-ic { fill: #fff; stroke: #5b90f0; stroke-width: 2; }
.ic-text {
  width: 20px;
  height: 20px;
  border: 2px solid #5b90f0;
  background: #fff;
  color: #2a60c0;
  font-size: 11px;
  line-height: 20px;
  text-align: center;
  letter-spacing: -.5px;
  white-space: nowrap;
  overflow: hidden;
}
.ic-text i { font-style: normal; font-size: 14px; }
.ic-text.zi { color: #f07030; border-color: #f09040; font-size: 17px; }
.ic-text.fx { border-color: #108080; border-radius: 6px; color: #205090; }
.ic-text.fx i { font-style: italic; font-family: "Liberation Serif", serif; font-size: 18px; }
.ic-text.fx small { font-size: 9px; }
.rsi { color: #3050a8; font-weight: 700; font-size: 17px; letter-spacing: -1px; text-shadow: 0 0 1px #7080c0; }
.sb-divider { height: 11.6px; flex-shrink: 0; display: flex; align-items: center; justify-content: center; }
.sb-divider::after { content: ""; width: 30px; height: 1.5px; background: #a8a8a8; }
.sb-divider.tall { height: 13.6px; }
.period { color: #2850a8; font-size: 18px; }
.period.on {
  background: #f8f8f8;
  border-top: 1.5px solid #b0b0b0;
  border-left: 1.5px solid #b0b0b0;
  box-sizing: border-box;
}

.status {
  height: 37px;
  box-sizing: border-box;
  display: flex;
  align-items: center;
  background: #f0f0f0;
  border-bottom: 2px solid #20303c;
  color: #333;
  font-size: 21px;
  white-space: nowrap;
  flex-shrink: 0;
}
.status .red { color: #f00000; }
.status-icon {
  display: block;
  width: 14px;
  height: 22px;
  margin-left: 4px;
  border: 2px solid #d08820;
  border-radius: 3px;
  background: linear-gradient(#fff0a0, #f0c050);
}
.idx { display: flex; align-items: center; gap: 25px; margin-left: 2px; }
.idx + .idx { margin-left: 26px; }
.idx-name { font-size: 24px; font-weight: 300; margin-right: -20px; }
.amt { color: #111; }
.amt em { font-style: normal; font-size: 24px; font-weight: 300; }
.mini-wrap {
  display: flex;
  gap: 4px;
  height: 35px;
  margin-left: 25px;
  padding: 0 4px;
  align-items: center;
  border-left: 1.5px solid #b0b0b0;
  border-right: 1.5px solid #b0b0b0;
}
.mini { width: 74px; }
.mini-top { display: flex; height: 8px; }
.mini-top i { flex: 15; background: #fff; border: 1px solid #e4e4e4; box-sizing: border-box; }
.mini-top .r { flex: 20; background: #f00000; border: none; }
.mini-top .g { flex: 9; background: #108a30; border: none; }
.mini-bot { display: grid; grid-template-columns: repeat(6, 1fr); gap: 2px; margin-top: 3px; }
.mini-bot i { height: 3px; background: #f00000; }
.broker { margin-left: 9px; font-size: 18px; }

.stamp {
  position: absolute;
  left: 1933px;
  top: 1334px;
  width: 222px;
  height: 56px;
  background: #fff;
  text-align: center;
  font-weight: 700;
  overflow: hidden;
}
.stamp-zh { color: #ee2a10; font-size: 30px; line-height: 32px; }
.stamp-en { color: #f08c10; font-size: 24px; line-height: 20px; }
</style>
